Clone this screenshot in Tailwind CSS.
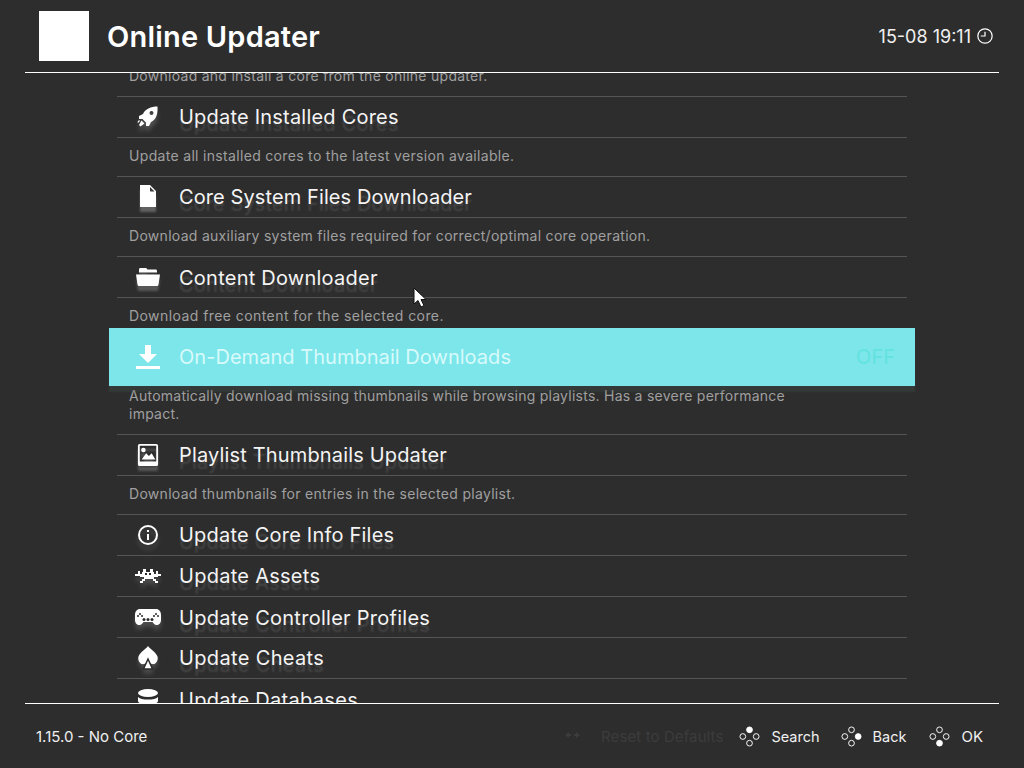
<!DOCTYPE html>
<html lang="en">

<head>
    <meta charset="UTF-8">
    <title>Online Updater</title>
    <script src="https://cdn.jsdelivr.net/npm/@tailwindcss/browser@4"></script>
</head>

<body class="bg-[#2d2d2d] font-['Inter',sans-serif] text-white">
    <div class="relative w-[1024px] h-[768px] overflow-hidden flex flex-col">
        <!-- Header -->
        <header class="h-[73px] shrink-0 mx-[25px] border-b border-white flex items-center pl-[14px] pr-[6px] pb-[1px]">
            <div class="w-[50px] h-[50px] bg-white"></div>
            <h1 class="ml-[18px] mt-[2px] text-[29px] font-semibold tracking-[0.2px]">Online Updater</h1>
            <div class="ml-auto flex items-center gap-[6px] text-[18px] text-[#f0f0f0]">
                <span class="mt-[2px]">15-08 19:11</span>
                <svg class="w-[16px] h-[16px]" viewBox="0 0 17 17" fill="none" stroke="white" stroke-width="1.300">
                    <circle cx="8.500" cy="8.500" r="7.600"></circle>
                    <path d="M8.500 4v4.500H4"></path>
                </svg>
            </div>
        </header>

        <!-- List -->
        <main class="flex-1 overflow-hidden">
            <div class="ml-[117px] w-[790px] mt-[-16px]">
                <p class="h-[40px] pl-[12px] pt-[8px] text-[14px] tracking-[0.27px] text-[#a0a0a0] border-b border-[#555]">Download and install a core from the online updater.</p>

                <div class="h-[41px] flex items-center border-b border-[#555] overflow-hidden">
                    <svg class="w-[24px] h-[24px] ml-[19px] [filter:drop-shadow(0_5px_2px_rgba(255,255,255,0.18))]" viewBox="0 0 24 24" fill="white">
                        <path d="M21.500 1.500C15 1.500 9 4 7 9l-4 2v3h3.500l3.500 3.500V21h3l2-4c5-2 7-8 6.500-15.500zM13.500 8a2 2 0 1 1 4 0 2 2 0 0 1-4 0z" fill-rule="evenodd"></path>
                        <path d="M5.500 15.500l3 3-4 3-1.500-1.500zM3 15l1 1-2 2-.5-1z"></path>
                    </svg>
                    <span class="ml-[19px] text-[20px] text-[#f4f4f4] tracking-[0.21px] [text-shadow:0_7px_2px_rgba(255,255,255,0.13)]">Update Installed Cores</span>
                </div>
                <p class="h-[39px] pl-[12px] pt-[7px] text-[14px] tracking-[0.32px] text-[#a0a0a0] border-b border-[#555]">Update all installed cores to the latest version available.</p>

                <div class="h-[41px] flex items-center border-b border-[#555] overflow-hidden">
                    <svg class="w-[24px] h-[24px] ml-[19px] [filter:drop-shadow(0_5px_1px_rgba(255,255,255,0.25))]" viewBox="0 0 24 24" fill="white">
                        <path d="M4 0h10l6 6v16H4zM14 2v4.500h4.500z" fill-rule="evenodd"></path>
                    </svg>
                    <span class="ml-[19px] text-[20px] text-[#f4f4f4] tracking-[0.1px] [text-shadow:0_7px_2px_rgba(255,255,255,0.13)]">Core System Files Downloader</span>
                </div>
                <p class="h-[39px] pl-[12px] pt-[7px] text-[14px] tracking-[0.29px] text-[#a0a0a0] border-b border-[#555]">Download auxiliary system files required for correct/optimal core operation.</p>

                <div class="h-[41px] flex items-center border-b border-[#555] overflow-hidden">
                    <svg class="w-[24px] h-[24px] ml-[19px] [filter:drop-shadow(0_5px_1px_rgba(255,255,255,0.2))]" viewBox="0 0 24 24" fill="white">
                        <path d="M3 6V4.500C3 3.500 3.700 3 4.500 3h5c1 0 1.500.7 2 1.500h8c1 0 1.500.7 1.500 1.500v1.500H3z"></path>
                        <path d="M0 9.500h24l-1.500 10c-.2 1-1 1.500-2 1.500h-17c-1 0-1.800-.5-2-1.500z"></path>
                    </svg>
                    <span class="ml-[19px] mt-[2px] text-[20px] text-[#f4f4f4] tracking-[0.24px] [text-shadow:0_7px_2px_rgba(255,255,255,0.13)]">Content Downloader</span>
                </div>
                <p class="h-[39px] pl-[12px] pt-[7px] text-[14px] tracking-[0.43px] text-[#a0a0a0]">Download free content for the selected core.</p>

                <!-- Selected row, wider than the list -->
                <div class="relative mx-[-8px] mt-[-9px] h-[58px] flex items-center bg-[#7de6ea] shadow-[0_6px_2px_rgba(70,90,80,0.3)]">
                    <svg class="w-[24px] h-[24px] ml-[27px]" viewBox="0 0 24 24" fill="white">
                        <path d="M9 0h6v9h6l-9 9-9-9h6z"></path>
                        <rect x="0" y="21" width="24" height="3"></rect>
                    </svg>
                    <span class="ml-[19px] text-[20px] text-[#d8fafa] tracking-[0.04px]">On-Demand Thumbnail Downloads</span>
                    <span class="ml-auto mr-[20px] text-[20px] text-[#62e2e0]">OFF</span>
                </div>
                <p class="h-[47px] pl-[12px] pt-[1px] pr-[100px] text-[14px] leading-[18px] tracking-[0.25px] text-[#a0a0a0] border-b border-[#555] box-content">Automatically download missing thumbnails while browsing playlists. Has a severe performance impact.</p>

                <div class="h-[41px] flex items-center border-b border-[#555] overflow-hidden">
                    <svg class="w-[22px] h-[22px] ml-[20px] [filter:drop-shadow(0_5px_1px_rgba(255,255,255,0.2))]" viewBox="0 0 24 24" fill="white">
                        <path d="M3 0h18a2 2 0 0 1 2 2v20a2 2 0 0 1-2 2H3a2 2 0 0 1-2-2V2a2 2 0 0 1 2-2zM3 2v17h18V2zM5 17l5-7 3 3 3-3 4 7zM7 4a2.500 2.500 0 1 1 0 5 2.500 2.500 0 0 1 0-5z" fill-rule="evenodd"></path>
                    </svg>
                    <span class="ml-[20px] text-[20px] text-[#f4f4f4] tracking-[0.16px] [text-shadow:0_7px_2px_rgba(255,255,255,0.13)]">Playlist Thumbnails Updater</span>
                </div>
                <p class="h-[39px] pl-[12px] pt-[7px] text-[14px] tracking-[0.3px] text-[#a0a0a0] border-b border-[#555]">Download thumbnails for entries in the selected playlist.</p>

                <div class="h-[41px] flex items-center border-b border-[#555] overflow-hidden">
                    <svg class="w-[24px] h-[24px] ml-[19px] [filter:drop-shadow(0_5px_2px_rgba(255,255,255,0.15))]" viewBox="0 0 24 24" fill="none" stroke="white" stroke-width="2">
                        <circle cx="12" cy="12" r="9"></circle>
                        <path d="M12 11v6M12 7v2"></path>
                    </svg>
                    <span class="ml-[19px] text-[20px] text-[#f4f4f4] tracking-[0.21px] [text-shadow:0_7px_2px_rgba(255,255,255,0.13)]">Update Core Info Files</span>
                </div>
                <div class="h-[41px] flex items-center border-b border-[#555] overflow-hidden">
                    <svg class="w-[26px] h-[14px] ml-[18px] [filter:drop-shadow(0_5px_2px_rgba(255,255,255,0.15))]" viewBox="0 0 26 14" fill="white">
                        <path d="M8 0h3v3h4V0h3v3h1v2h2V2h2v3h3v2h-3v1h-4v2h2v2h2v2h-3v-2h-2v-2h-8v2H8v2H5v-2h2v-2h2V8H5V7H2v-0H0V5h3V2h2v3h2V3h1z"></path>
                        <g fill="#2d2d2d">
                            <rect x="10" y="4" width="2" height="2"></rect>
                            <rect x="14" y="4" width="2" height="2"></rect>
                        </g>
                    </svg>
                    <span class="ml-[18px] text-[20px] text-[#f4f4f4] tracking-[0.27px] [text-shadow:0_7px_2px_rgba(255,255,255,0.13)]">Update Assets</span>
                </div>
                <div class="h-[41px] flex items-center border-b border-[#555] overflow-hidden">
                    <svg class="w-[26px] h-[26px] ml-[18px] [filter:drop-shadow(0_5px_2px_rgba(255,255,255,0.15))]" viewBox="0 0 26 26" fill="white">
                        <path d="M5 5h16c3 0 5 2.500 5 6v5c0 3-2 5-4.500 5-2 0-3-1.500-4-3H8.500c-1 1.500-2 3-4 3C2 21 0 19 0 16v-5c0-3.500 2-6 5-6z"></path>
                        <g fill="#2d2d2d">
                            <circle cx="5" cy="10" r="1"></circle>
                            <circle cx="3" cy="12" r="1"></circle>
                            <circle cx="7" cy="12" r="1"></circle>
                            <circle cx="21" cy="10" r="1"></circle>
                            <circle cx="19" cy="12" r="1"></circle>
                            <circle cx="23" cy="12" r="1"></circle>
                            <circle cx="9" cy="15.500" r="1.500"></circle>
                            <circle cx="13" cy="15.500" r="1.500"></circle>
                            <circle cx="17" cy="15.500" r="1.500"></circle>
                        </g>
                    </svg>
                    <span class="ml-[18px] mt-[2px] text-[20px] text-[#f4f4f4] tracking-[0.27px] [text-shadow:0_7px_2px_rgba(255,255,255,0.13)]">Update Controller Profiles</span>
                </div>
                <div class="h-[41px] flex items-center border-b border-[#555] overflow-hidden">
                    <svg class="w-[24px] h-[24px] ml-[19px] [filter:drop-shadow(0_4px_2px_rgba(255,255,255,0.15))]" viewBox="0 0 24 24" fill="white">
                        <path d="M12 0c2 3 8 6 9.500 10.500C22.500 14 20 19 16 18c-1-.2-2-.8-2.500-1.500h-3c-.5.7-1.500 1.300-2.500 1.500-4 1-6.500-4-5.500-7.500C4 6 10 3 12 0z"></path>
                        <path d="M12 13l-4.500 10h9z" stroke="#2d2d2d" stroke-width="1.500"></path>
                    </svg>
                    <span class="ml-[19px] text-[20px] text-[#f4f4f4] tracking-[0.35px] [text-shadow:0_7px_2px_rgba(255,255,255,0.13)]">Update Cheats</span>
                </div>
                <div class="h-[41px] flex items-center overflow-hidden">
                    <svg class="w-[24px] h-[24px] ml-[19px]" viewBox="0 0 24 24" fill="white">
                        <ellipse cx="12" cy="5" rx="10" ry="4"></ellipse>
                        <path d="M2 9c2 2 5 2.500 10 2.500S20 11 22 9v4c0 2-4 3.500-10 3.500S2 15 2 13z"></path>
                    </svg>
                    <span class="ml-[19px] text-[20px] text-[#f4f4f4] tracking-[0.3px]">Update Databases</span>
                </div>
            </div>
        </main>

        <!-- Footer -->
        <footer class="h-[65px] shrink-0 mx-[25px] border-t border-white flex items-center pl-[11px] pr-[16px] pt-[2px] text-[15px] text-[#f0f0f0]">
            <span>1.15.0 - No Core</span>
            <div class="ml-auto flex items-center text-[14.500px]">
                <svg class="w-[15px] h-[8px] mr-[21px] mt-[-4px]" viewBox="0 0 15 8" fill="#3c3c3c">
                    <path d="M0 4l4-3v2h2v2H4v2zM15 4l-4-3v2H9v2h2v2z"></path>
                </svg>
                <span class="text-[#3c3c3c] text-[15px] tracking-[0.1px] mr-[16px]">Reset to Defaults</span>
                <svg class="w-[21px] h-[21px] mr-[11px] mt-[-2px]" viewBox="0 0 22 22" fill="none" stroke="white" stroke-width="1">
                    <circle cx="11" cy="4" r="3" fill="white"></circle>
                    <circle cx="4" cy="11" r="3"></circle>
                    <circle cx="18" cy="11" r="3"></circle>
                    <circle cx="11" cy="18" r="3"></circle>
                </svg>
                <span class="mr-[21px]">Search</span>
                <svg class="w-[21px] h-[21px] mr-[11px] mt-[-2px]" viewBox="0 0 22 22" fill="none" stroke="white" stroke-width="1">
                    <circle cx="11" cy="4" r="3"></circle>
                    <circle cx="4" cy="11" r="3"></circle>
                    <circle cx="18" cy="11" r="3" fill="white"></circle>
                    <circle cx="11" cy="18" r="3"></circle>
                </svg>
                <span class="mr-[23px]">Back</span>
                <svg class="w-[21px] h-[21px] mr-[11px] mt-[-2px]" viewBox="0 0 22 22" fill="none" stroke="white" stroke-width="1">
                    <circle cx="11" cy="4" r="3"></circle>
                    <circle cx="4" cy="11" r="3"></circle>
                    <circle cx="18" cy="11" r="3"></circle>
                    <circle cx="11" cy="18" r="3" fill="white"></circle>
                </svg>
                <span class="text-[15px]">OK</span>
            </div>
        </footer>

        <!-- Mouse cursor -->
        <svg class="absolute left-[413px] top-[287px] w-[14px] h-[22px]" viewBox="0 0 14 22" fill="white" stroke="#111" stroke-width="1">
            <path d="M1 1v16l4-3.500 3 6.500 3-1.500-3-6h5z"></path>
        </svg>
    </div>
</body>

</html>
